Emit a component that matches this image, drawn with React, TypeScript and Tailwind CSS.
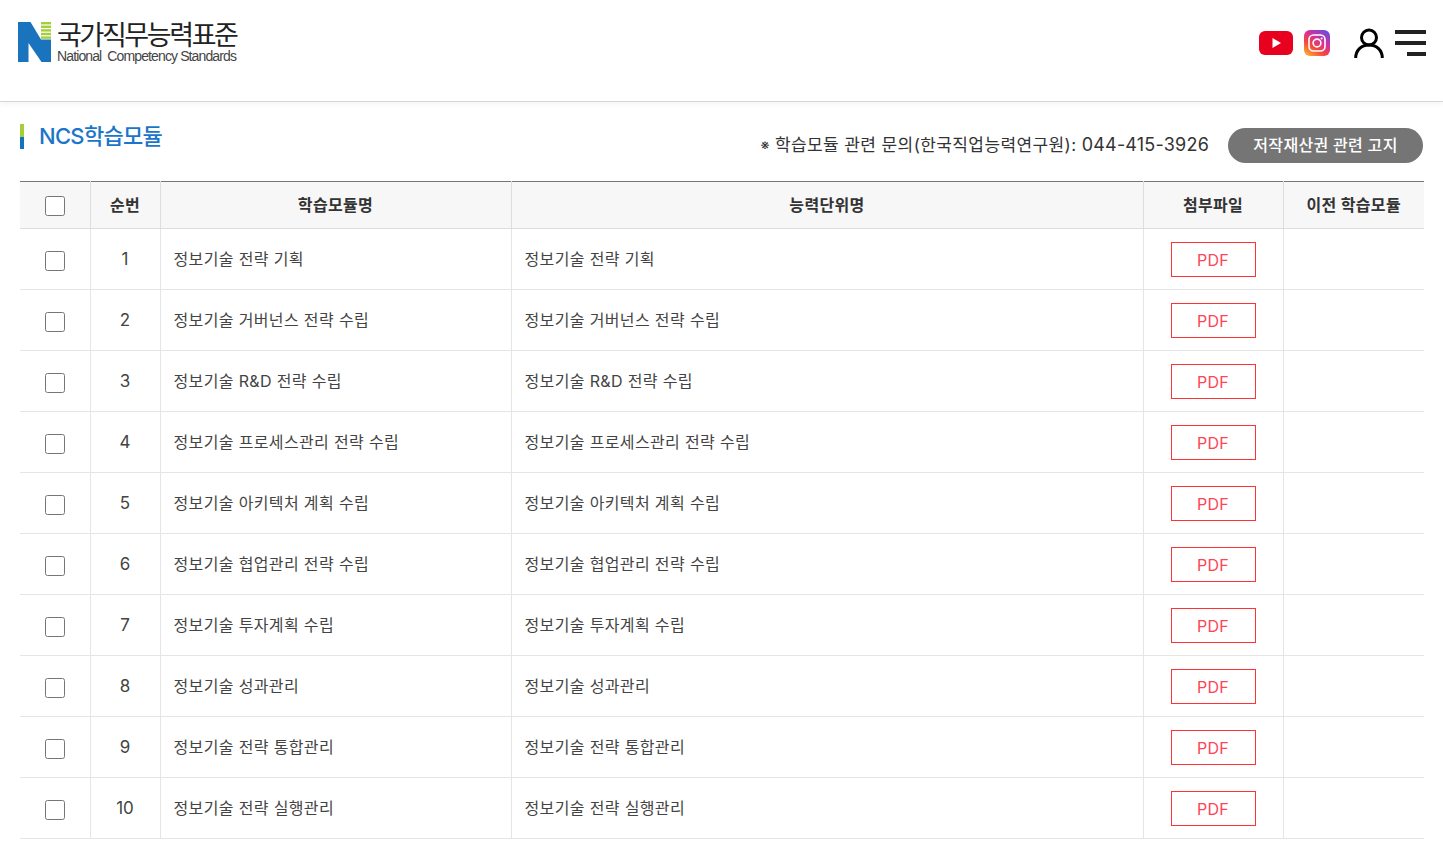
const font = 'Inter, "Noto Sans CJK KR", "Noto Sans", sans-serif';

const rows = [
  "정보기술 전략 기획",
  "정보기술 거버넌스 전략 수립",
  "정보기술 R&D 전략 수립",
  "정보기술 프로세스관리 전략 수립",
  "정보기술 아키텍처 계획 수립",
  "정보기술 협업관리 전략 수립",
  "정보기술 투자계획 수립",
  "정보기술 성과관리",
  "정보기술 전략 통합관리",
  "정보기술 전략 실행관리",
];

function Logo() {
  return (
    <div className="flex items-start">
      <svg width="34" height="41" viewBox="0 0 34 41" className="mt-[1px] shrink-0">
        <path d="M0 1h12.5L23 18.5h10V41h-9.5L10.5 22V41H0z" fill="#1a73bd" />
        <rect x="23" y="1" width="10" height="2.4" fill="#a6ce39" />
        <rect x="23" y="4.6" width="10" height="2.4" fill="#a6ce39" />
        <rect x="23" y="8.2" width="10" height="2.4" fill="#a6ce39" />
        <rect x="23" y="11.8" width="10" height="2.4" fill="#a6ce39" />
        <rect x="23" y="15.4" width="10" height="2.4" fill="#a6ce39" />
      </svg>
      <div className="ml-[5px] flex flex-col">
        <span className="text-[27px] leading-[28px] tracking-[-2.4px] text-[#222] whitespace-nowrap" style={{ fontFamily: '"Noto Sans CJK KR", sans-serif' }}>국가직무능력표준</span>
        <span className="text-[14px] leading-[16px] tracking-[-0.88px] text-[#444] whitespace-nowrap" style={{ fontFamily: '"Liberation Sans", sans-serif' }}>
          National&nbsp; Competency Standards
        </span>
      </div>
    </div>
  );
}

function Youtube() {
  return (
    <svg width="34" height="24" viewBox="0 0 34 24">
      <rect x="0" y="0" width="34" height="24" rx="6" fill="#e8001f" />
      <path d="M13.5 7l8.5 5-8.5 5z" fill="#fff" />
    </svg>
  );
}

function Instagram() {
  return (
    <svg width="26" height="26" viewBox="0 0 26 26">
      <defs>
        <linearGradient id="ig" x1="0.1" y1="1" x2="0.8" y2="0">
          <stop offset="0" stopColor="#fdb32b" />
          <stop offset="0.35" stopColor="#f4483c" />
          <stop offset="0.65" stopColor="#d62f9b" />
          <stop offset="1" stopColor="#6a4be0" />
        </linearGradient>
      </defs>
      <rect width="26" height="26" rx="6" fill="url(#ig)" />
      <rect x="5" y="5" width="16" height="16" rx="4.5" fill="none" stroke="#fff" strokeWidth="1.6" />
      <circle cx="13" cy="13" r="3.9" fill="none" stroke="#fff" strokeWidth="1.6" />
      <circle cx="17.6" cy="8.4" r="1" fill="#fff" />
    </svg>
  );
}

function User() {
  return (
    <svg width="30" height="31" viewBox="0 0 30 31" fill="none" stroke="#000" strokeWidth="3">
      <circle cx="15" cy="9.5" r="7.5" />
      <path d="M1.7 30c0-7.5 5.5-13 13.3-13s13.3 5.5 13.3 13" />
    </svg>
  );
}

function Menu() {
  return (
    <div className="flex flex-col items-end w-[31px]">
      <div className="h-[4px] w-[31px] bg-[#222]" />
      <div className="mt-[7px] h-[4px] w-[31px] bg-[#222]" />
      <div className="mt-[7px] h-[4px] w-[19px] bg-[#222]" />
    </div>
  );
}

const th = "h-[47px] border-b border-r border-[#ddd] bg-[#f7f7f7] text-[16px] font-bold text-[#333] text-center align-middle tracking-[0.33px]";
const td = "h-[61px] border-b border-r border-[#e5e5e5] text-[16px] text-[#444] align-middle tracking-[0.36px]";

export default function App() {
  return (
    <div className="h-[848px] w-[1443px] overflow-hidden bg-white" style={{ fontFamily: font }}>
      <header className="flex h-[102px] items-start justify-between border-b border-[#d8d8d8] pl-[18px] pr-[17px] pt-[20px] shadow-[0_2px_6px_rgba(0,0,0,0.05)]">
        <Logo />
        <div className="flex items-center pt-[6px]">
          <Youtube />
          <div className="ml-[11px]"><Instagram /></div>
          <div className="ml-[24px] mt-[2px]"><User /></div>
          <div className="ml-[11px]"><Menu /></div>
        </div>
      </header>

      <main className="px-[20px]">
        <div className="flex h-[79px] items-start justify-between">
          <div className="mt-[22px] flex items-center">
            <div className="flex h-[25px] w-[4px] flex-col">
              <div className="h-[13px] bg-[#a6ce39]" />
              <div className="h-[12px] bg-[#0f75bd]" />
            </div>
            <h1 className="ml-[15px] text-[22px] font-medium leading-[25px] tracking-[-0.7px] text-[#1b75c9]">NCS학습모듈</h1>
          </div>
          <div className="mt-[26px] flex h-[35px] items-center">
            <p className="text-[17px] leading-[35px] text-[#333] tracking-[0.4px] whitespace-nowrap">
              <span className="align-[1px] text-[14px] leading-none">※</span> 학습모듈 관련 문의(한국직업능력연구원): <span className="text-[18px] leading-none tracking-[0.2px]">044-415-3926</span>
            </p>
            <button className="ml-[19px] h-[35px] w-[195px] rounded-full bg-[#757575] pb-[2px] text-[16px] font-medium tracking-[0.3px] text-white">저작재산권 관련 고지</button>
          </div>
        </div>

        <table className="w-[1404px] table-fixed border-collapse border-t border-[#777]">
          <colgroup>
            <col className="w-[70px]" />
            <col className="w-[70px]" />
            <col className="w-[351px]" />
            <col className="w-[632px]" />
            <col className="w-[140px]" />
            <col className="w-[141px]" />
          </colgroup>
          <thead>
            <tr>
              <th className={th}><input type="checkbox" className="mx-auto mt-[1px] block h-5 w-5" /></th>
              <th className={th}>순번</th>
              <th className={th}>학습모듈명</th>
              <th className={th}>능력단위명</th>
              <th className={th}>첨부파일</th>
              <th className={`${th} border-r-0`}>이전 학습모듈</th>
            </tr>
          </thead>
          <tbody>
            {rows.map((name, i) => (
              <tr key={i}>
                <td className={td}><input type="checkbox" className="mx-auto mt-[3px] block h-5 w-5" /></td>
                <td className={`${td} pt-[2px] text-center text-[17px] tracking-normal`}>{i + 1}</td>
                <td className={`${td} pl-[13px]`}>{name}</td>
                <td className={`${td} pl-[13px]`}>{name}</td>
                <td className={`${td} text-center`}>
                  <a className="mx-auto flex h-[35px] w-[85px] items-center justify-center border border-[#f33] pt-[2px] text-[16px] tracking-[0.3px] text-[#ff4455]">PDF</a>
                </td>
                <td className={`${td} border-r-0`} />
              </tr>
            ))}
          </tbody>
        </table>
      </main>
    </div>
  );
}
